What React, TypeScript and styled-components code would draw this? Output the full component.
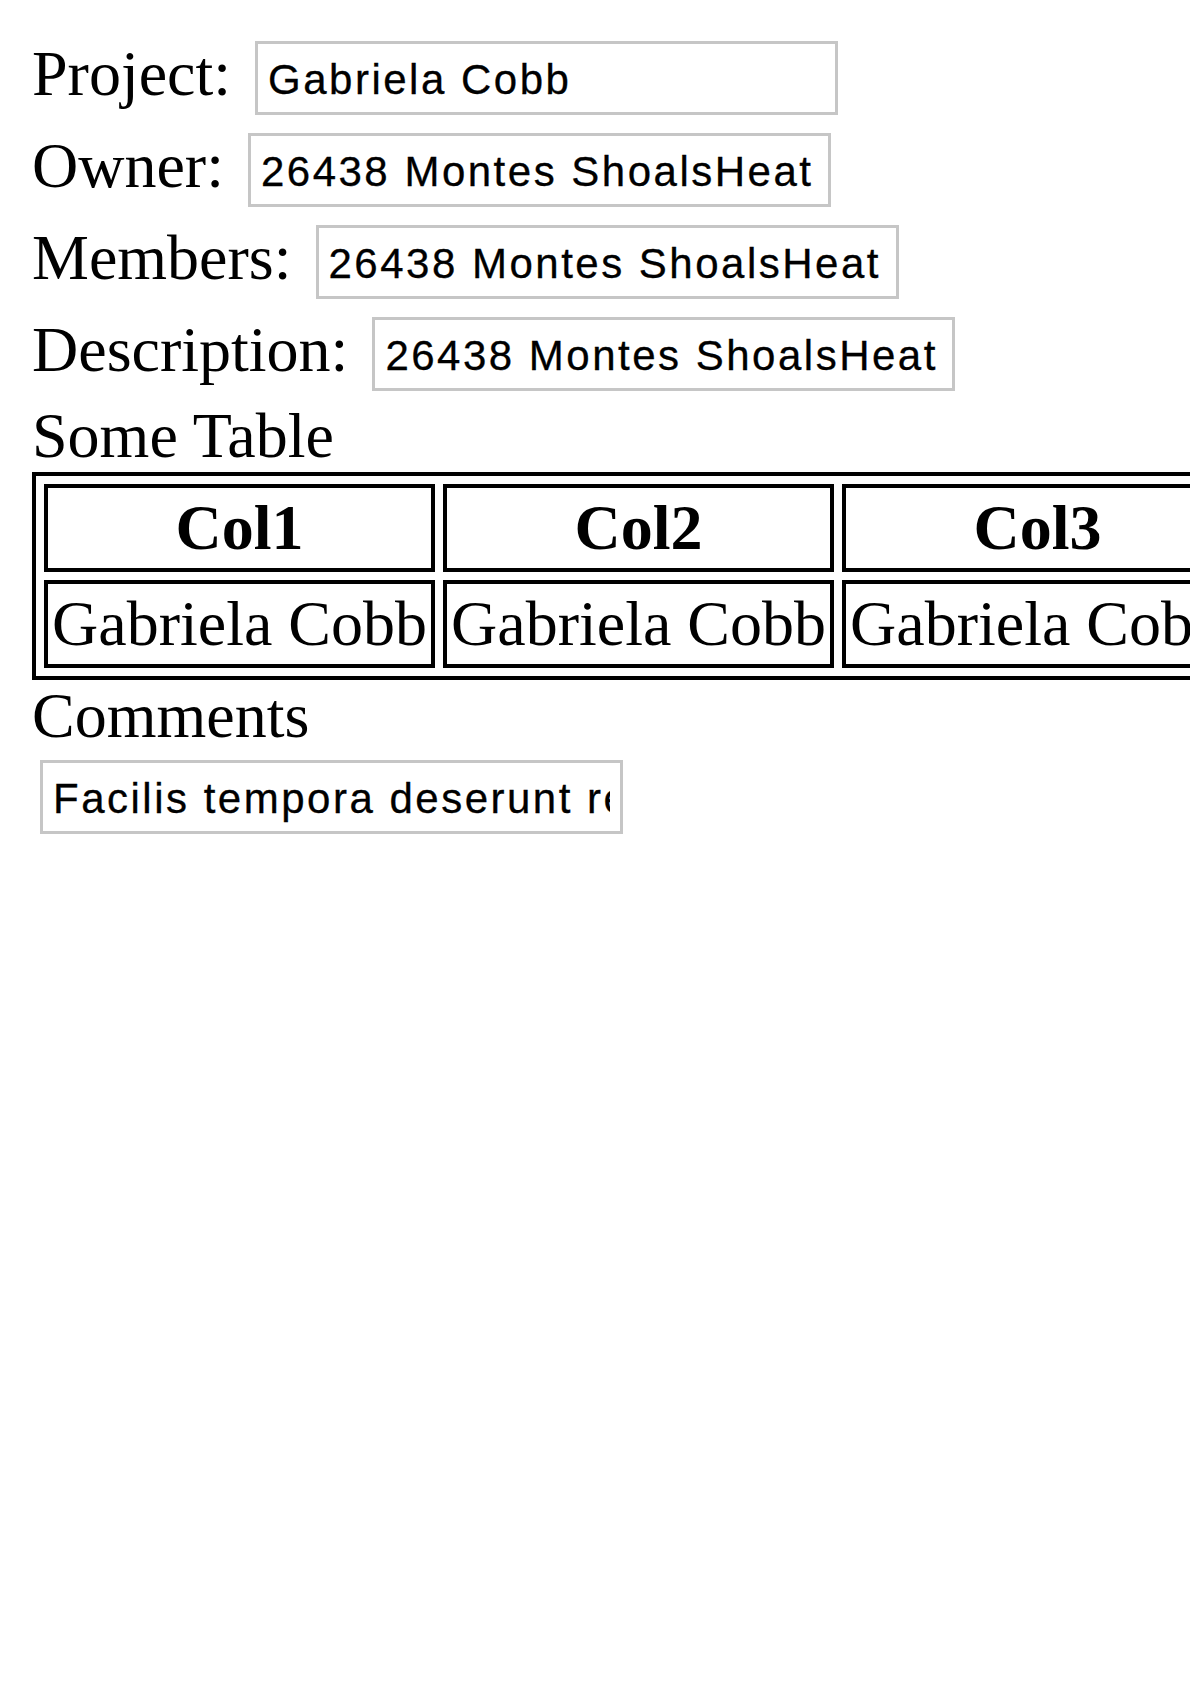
import styled, { createGlobalStyle } from 'styled-components';

const GlobalStyle = createGlobalStyle`
  html {
    overflow-x: hidden;
  }
  body {
    margin: 0;
    background: #fff;
    color: #000;
    font-family: 'Liberation Serif', 'Times New Roman', serif;
    font-size: 64px;
  }
`;

const Page = styled.div`
  display: flex;
  flex-direction: column;
  align-items: flex-start;
  padding: 32px;
`;

const FieldRow = styled.div`
  display: flex;
  align-items: center;
  height: 92px;
`;

const FieldLabel = styled.label`
  font-size: 64px;
  line-height: 72px;
  margin-right: 24px;
  margin-bottom: 8px;
  white-space: nowrap;
`;

const TextInput = styled.input<{ $block?: boolean }>`
  box-sizing: border-box;
  width: 583px;
  height: 74px;
  margin: ${(p) => (p.$block ? '8px' : '0')};
  padding: 4px 10px 0;
  border: 3px solid #c6c6c6;
  border-radius: 0;
  background: #fff;
  color: #000;
  font-family: 'Liberation Sans', Arial, sans-serif;
  font-size: 42px;
  letter-spacing: 2.5px;
  -webkit-text-stroke: 0.3px #000;
  outline: none;
`;

const Heading = styled.div`
  font-size: 64px;
  line-height: 72px;
`;

const Grid = styled.table`
  flex-shrink: 0;
  border: 4px solid #000;
  border-collapse: separate;
  border-spacing: 8px;
  font-size: 64px;
`;

const HeadCell = styled.th`
  border: 4px solid #000;
  padding: 4px;
  line-height: 72px;
  font-weight: bold;
  text-align: center;
  white-space: nowrap;
`;

const BodyCell = styled.td`
  border: 4px solid #000;
  padding: 4px;
  line-height: 72px;
  white-space: nowrap;
`;

const fields = [
  { label: 'Project:', value: 'Gabriela Cobb' },
  { label: 'Owner:', value: '26438 Montes ShoalsHeat' },
  { label: 'Members:', value: '26438 Montes ShoalsHeat' },
  { label: 'Description:', value: '26438 Montes ShoalsHeat' },
];

const columns = ['Col1', 'Col2', 'Col3'];

export default function App() {
  return (
    <>
      <GlobalStyle />
      <Page>
        {fields.map((f) => (
          <FieldRow key={f.label}>
            <FieldLabel>{f.label}</FieldLabel>
            <TextInput type="text" defaultValue={f.value} />
          </FieldRow>
        ))}
        <Heading>Some Table</Heading>
        <Grid>
          <thead>
            <tr>
              {columns.map((c) => (
                <HeadCell key={c}>{c}</HeadCell>
              ))}
            </tr>
          </thead>
          <tbody>
            <tr>
              {columns.map((c) => (
                <BodyCell key={c}>Gabriela Cobb</BodyCell>
              ))}
            </tr>
          </tbody>
        </Grid>
        <Heading>Comments</Heading>
        <TextInput $block type="text" defaultValue="Facilis tempora deserunt reprehenderit" />
      </Page>
    </>
  );
}
